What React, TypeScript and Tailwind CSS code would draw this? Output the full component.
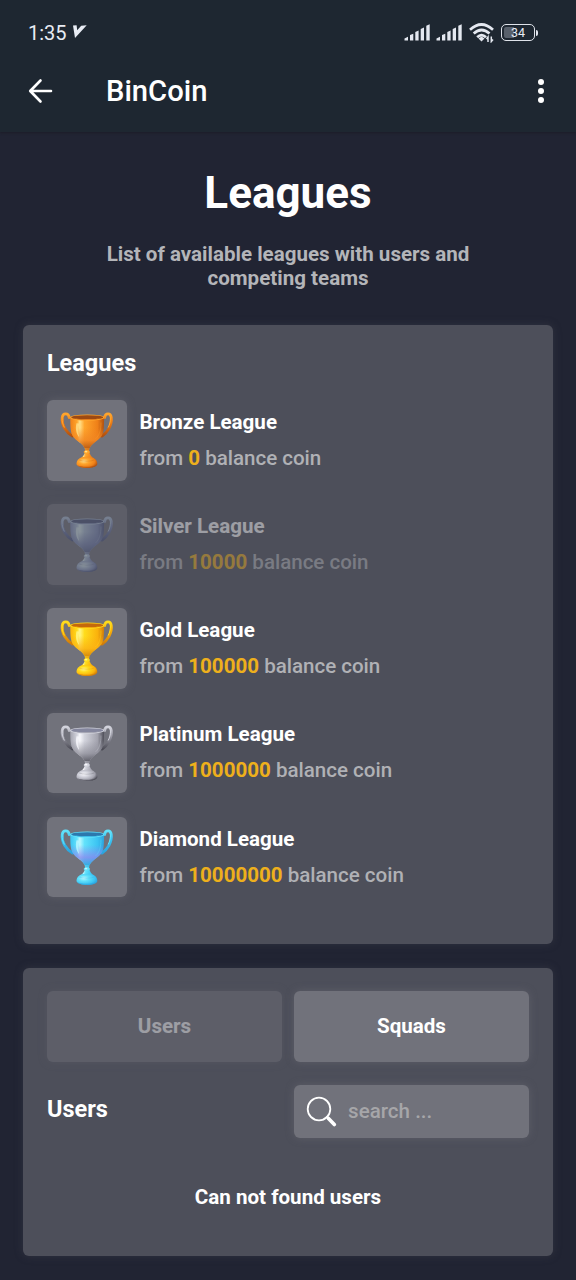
type Palette = {
  id: string;
  dark: string;
  mid: string;
  light: string;
  shine: string;
  low: string;
  inner: string;
};

type League = { name: string; amount: string; dim?: boolean; palette: Palette };

const leagues: League[] = [
  {
    name: "Bronze League",
    amount: "0",
    palette: { id: "bronze", dark: "#b0500f", mid: "#ef8018", light: "#ffa52c", shine: "#ffe08a", low: "#f08422", inner: "#9c4a14" },
  },
  {
    name: "Silver League",
    amount: "10000",
    dim: true,
    palette: { id: "silver", dark: "#4d5680", mid: "#7c89b4", light: "#a9bbd3", shine: "#d3e6ea", low: "#6a75a6", inner: "#4a5378" },
  },
  {
    name: "Gold League",
    amount: "100000",
    palette: { id: "gold", dark: "#d07c0a", mid: "#fbb20c", light: "#ffdc1c", shine: "#fff68a", low: "#fbb014", inner: "#c4690c" },
  },
  {
    name: "Platinum League",
    amount: "1000000",
    palette: { id: "platinum", dark: "#4b4b55", mid: "#a3a3ae", light: "#d2d3dc", shine: "#f8f8fc", low: "#8d8d98", inner: "#85879e" },
  },
  {
    name: "Diamond League",
    amount: "10000000",
    palette: { id: "diamond", dark: "#2ba4de", mid: "#3cc4f2", light: "#62e2fb", shine: "#bdf8ff", low: "#8b83ee", inner: "#2c78ad" },
  },
];

function Trophy({ p }: { p: Palette }) {
  const bowl = `bowl-${p.id}`;
  const shade = `shade-${p.id}`;
  const foot = `foot-${p.id}`;
  const handle = `handle-${p.id}`;
  return (
    <svg viewBox="21 26 243 243" className="size-full">
      <defs>
        <linearGradient id={bowl} x1="0" x2="1" y1="0" y2="0">
          <stop offset="0" stopColor={p.mid} />
          <stop offset="0.2" stopColor={p.light} />
          <stop offset="0.28" stopColor={p.shine} />
          <stop offset="0.42" stopColor={p.light} />
          <stop offset="0.8" stopColor={p.mid} />
          <stop offset="1" stopColor={p.dark} />
        </linearGradient>
        <linearGradient id={shade} x1="0" x2="0" y1="0" y2="1">
          <stop offset="0.35" stopColor={p.low} stopOpacity="0" />
          <stop offset="0.75" stopColor={p.low} stopOpacity="0.75" />
          <stop offset="1" stopColor={p.dark} stopOpacity="0.8" />
        </linearGradient>
        <radialGradient id={foot} cx="0.35" cy="0.4" r="0.7">
          <stop offset="0" stopColor={p.shine} />
          <stop offset="0.35" stopColor={p.light} />
          <stop offset="0.75" stopColor={p.mid} />
          <stop offset="1" stopColor={p.dark} />
        </radialGradient>
        <linearGradient id={handle} x1="0" x2="0" y1="0" y2="1">
          <stop offset="0" stopColor={p.light} />
          <stop offset="0.35" stopColor={p.mid} />
          <stop offset="1" stopColor={p.dark} />
        </linearGradient>
      </defs>
      <g fill="none" strokeLinecap="round">
        <path d="M88 79C86 65 69 64 67 79C64 102 79 123 98 135" stroke={`url(#${handle})`} strokeWidth="8.500" />
        <path d="M195 79C197 65 213 64 215 79C218 102 203 123 187 135" stroke={`url(#${handle})`} strokeWidth="8.500" />
        <path d="M86 70C77 65 69 70 67 80C66 90 69 101 73 108" stroke={p.light} strokeWidth="3" />
        <path d="M198 70C205 65 212 70 213 80C213 90 210 101 206 108" stroke={p.light} strokeWidth="3" />
      </g>
      <path d="M133 157H151L148 179C149 190 155 198 165 204H118C129 198 136 190 136 179Z" fill={`url(#${bowl})`} />
      <path d="M133 157H151L147 178H136Z" fill={p.dark} opacity="0.4" />
      <path d="M118 203C127 195 155 195 165 203C171 207 173 213 173 220C169 235 116 235 110 220C110 213 112 207 118 203Z" fill={`url(#${foot})`} />
      <path d="M113 223C122 234 161 234 171 222C164 228 126 230 113 223Z" fill={p.dark} opacity="0.65" />
      <path d="M118 207C128 212 154 212 164 207" fill="none" stroke={p.dark} strokeWidth="2" opacity="0.35" />
      <ellipse cx="141" cy="183" rx="9" ry="5" fill={p.light} />
      <ellipse cx="139" cy="182" rx="4" ry="2.500" fill={p.shine} />
      <path d="M91 77C92 96 90 116 98 133C106 149 130 156 134 171H150C154 157 177 149 187 133C195 116 192 96 194 77Z" fill={`url(#${bowl})`} />
      <path d="M91 77C92 96 90 116 98 133C106 149 130 156 134 171H150C154 157 177 149 187 133C195 116 192 96 194 77Z" fill={`url(#${shade})`} />
      <path d="M110 96C106 112 109 128 118 138C115 124 115 110 119 97Z" fill={p.shine} opacity="0.8" />
      <path d="M184 94C184 117 179 133 168 143" stroke={p.light} strokeWidth="3" fill="none" opacity="0.35" />
      <ellipse cx="142.500" cy="79" rx="52" ry="9.500" fill={p.light} />
      <ellipse cx="142.500" cy="78.500" rx="48" ry="6.500" fill={p.inner} />
      <path d="M100 80C116 85 167 86 184 80C170 88 116 88 100 80Z" fill={p.mid} />
    </svg>
  );
}

function Signal() {
  return (
    <svg viewBox="0 0 27 18" className="h-[18px] w-[27px]" fill="#e4e8f0">
      <path d="M.5 17.600V15.400L4 13.800V17.600ZM6 17.600V12L9.300 10.700V17.600ZM11.300 17.600V9L14.600 7.400V17.600ZM16.700 17.600V6L20 4.400V17.600ZM22.300 17.600V2.800L25.700 1.200V17.600Z" />
    </svg>
  );
}

function StatusBar() {
  return (
    <div className="flex h-[50px] items-start pt-[23px] pl-7 pr-[38px] text-[#e8ecf4]">
      <span className="text-[20px] leading-[21px]">1:35</span>
      <svg viewBox="0 0 14 14" className="ml-[6px] mt-[2px] size-[14px]" fill="#e8ecf4">
        <path d="M0 .6 3.600.3 4.200 5.200 8.200.7 13.700.3 2 13Z" />
      </svg>
      <div className="ml-auto flex items-start">
        <Signal />
        <span className="w-[5px]" />
        <Signal />
        <svg viewBox="0 0 26 20" className="ml-1.5 h-5 w-[26px]" fill="none" stroke="#e4e8f0" strokeWidth="2.700">
          <path d="M1 6.700Q12.500-3.700 24 6.700M4.700 10.600Q12.500 3.400 20.500 10.600M8.200 14.300Q12.500 10 17 14.300" />
          <path d="m9.500 15.500 3-2 3 2-3 3Z" fill="#e4e8f0" stroke="none" />
          <path d="M19 19V14l-1.500 2M22.300 13.500v5l1.700-2" strokeWidth="1.500" />
        </svg>
        <div className="ml-[6px] mt-px flex items-center">
          <div className="flex h-[17px] w-[34px] items-center justify-center rounded-[5px] border-[1.500px] border-[#dfe3ea] bg-linear-to-r from-[#58606b] from-36% to-transparent to-36% bg-clip-content p-[2px] text-[12.500px] leading-none">
            <span className="pt-px">34</span>
          </div>
          <span className="ml-px h-[6px] w-[2px] rounded-r bg-[#e4e8f0]" />
        </div>
      </div>
    </div>
  );
}

function AppBar() {
  return (
    <div className="flex h-[82px] items-center pl-7 pr-8 text-white">
      <svg viewBox="0 0 26 26" className="size-[26px]" fill="none" stroke="currentColor" strokeWidth="2.600" strokeLinecap="round" strokeLinejoin="round">
        <path d="M23 13H2.500M12.500 2.500 2.200 13l10.300 10.500" />
      </svg>
      <span className="ml-[52px] pt-[2px] text-[29.200px] font-medium leading-none">BinCoin</span>
      <div className="ml-auto flex flex-col gap-[3px]">
        <span className="size-[6px] rounded-full bg-white" />
        <span className="size-[6px] rounded-full bg-white" />
        <span className="size-[6px] rounded-full bg-white" />
      </div>
    </div>
  );
}

function LeagueRow({ league }: { league: League }) {
  return (
    <li className={league.dim ? "flex items-center gap-3 opacity-45" : "flex items-center gap-3"}>
      <div className="size-[80.500px] shrink-0 overflow-hidden rounded-[6px] bg-[#71727b] shadow-[0_0_9px_rgba(113,114,123,0.45)]">
        <Trophy p={league.palette} />
      </div>
      <div className="flex flex-col gap-3 pb-px text-[20.570px] leading-6">
        <span className="font-bold text-white">{league.name}</span>
        <span className="font-medium tracking-[-0.020px] text-[#b0b1b5]">
          from <b className="font-bold tracking-normal text-[#eeb01c]">{league.amount}</b> balance coin
        </span>
      </div>
    </li>
  );
}

export default function App() {
  return (
    <div className="h-[1280px] w-[576px] overflow-hidden bg-[#212433] font-['Roboto',sans-serif]">
      <header className="h-[132px] bg-[#1e2731] shadow-[0_1px_2px_#1c1c28]">
        <StatusBar />
        <AppBar />
      </header>
      <main className="px-[23.400px]">
        <h1 className="pt-[37px] text-center text-[44px] font-bold leading-[48px] text-white">Leagues</h1>
        <p className="mx-auto mt-[25px] w-[400px] text-center text-[20.570px] font-bold leading-6 text-[#b4b5b9]">
          List of available leagues with users and competing teams
        </p>
        <section className="mt-[35px] h-[619px] rounded-[6px] bg-[#4d4f5a] px-[23.500px] pt-[26px] shadow-[0_0_9px_rgba(77,79,90,0.35)]">
          <h2 className="text-[23.500px] font-bold leading-6 text-white">Leagues</h2>
          <ul className="mt-[25px] flex flex-col gap-[23.700px]">
            {leagues.map((league) => (
              <LeagueRow key={league.name} league={league} />
            ))}
          </ul>
        </section>
        <section className="mt-[23.500px] h-[288.500px] rounded-[6px] bg-[#4d4f5a] px-[23.500px] pt-[23.500px] shadow-[0_0_9px_rgba(77,79,90,0.35)]">
          <div className="grid grid-cols-2 gap-[11.700px] text-[20.570px] font-bold">
            <button className="h-[70.500px] rounded-[6px] bg-[#71727b] text-white opacity-45 shadow-[0_0_9px_rgba(113,114,123,0.45)]">Users</button>
            <button className="h-[70.500px] rounded-[6px] bg-[#71727b] text-white shadow-[0_0_9px_rgba(113,114,123,0.45)]">Squads</button>
          </div>
          <div className="mt-[23.500px] flex justify-between">
            <h2 className="pt-3 text-[23.500px] font-bold leading-6 text-white">Users</h2>
            <div className="flex h-[53px] w-[235px] items-center rounded-[6px] bg-[#71727b] pl-[12px] shadow-[0_0_9px_rgba(113,114,123,0.45)]">
              <svg viewBox="0 0 31 31" className="size-[31px]" fill="none" stroke="white" strokeLinecap="round">
                <circle cx="13" cy="13" r="11.300" strokeWidth="1.800" />
                <path d="m21 21 2 2" strokeWidth="2" />
                <path d="m22.500 22.500 5.800 6" strokeWidth="3.600" />
              </svg>
              <span className="ml-[11px] text-[20.570px] font-medium text-[#a6a6a9]">search ...</span>
            </div>
          </div>
          <p className="mt-[47px] text-center text-[20.570px] font-bold leading-6 text-white">Can not found users</p>
        </section>
      </main>
    </div>
  );
}
